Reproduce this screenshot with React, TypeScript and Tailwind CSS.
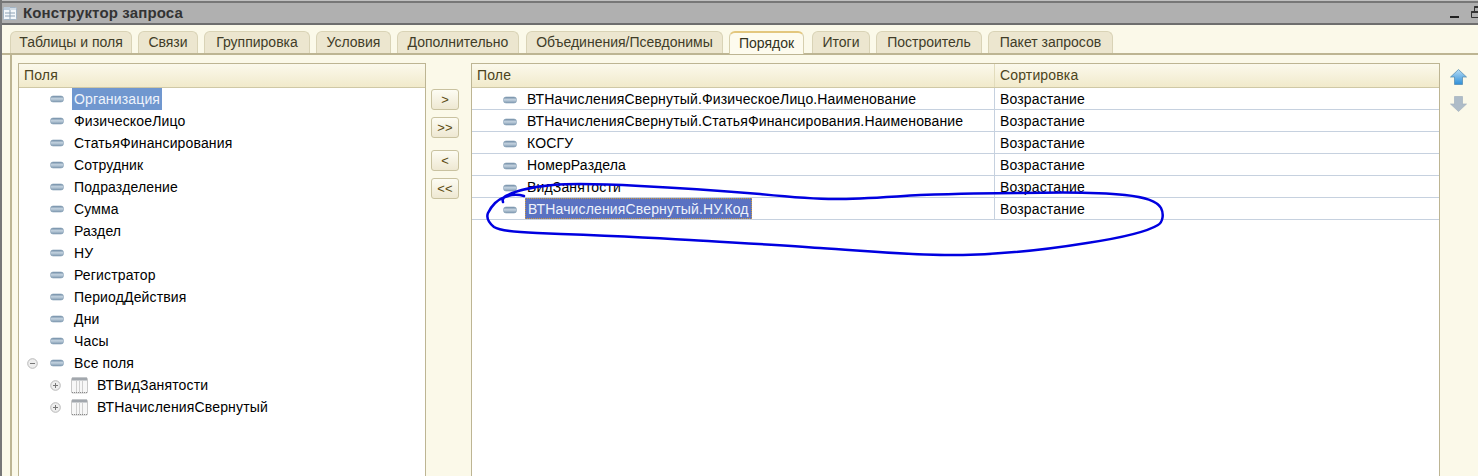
const tabs = [
  { label: "Таблицы и поля", w: "w-[122px]", gap: "mr-[6px]" },
  { label: "Связи", w: "w-[60px]", gap: "mr-[6px]" },
  { label: "Группировка", w: "w-[106px]", gap: "mr-[6px]" },
  { label: "Условия", w: "w-[75px]", gap: "mr-[6px]" },
  { label: "Дополнительно", w: "w-[122px]", gap: "mr-[7px]" },
  { label: "Объединения/Псевдонимы", w: "w-[197px]", gap: "mr-[6px]" },
  { label: "Порядок", w: "w-[75px]", gap: "mr-[8px]", active: true },
  { label: "Итоги", w: "w-[58px]", gap: "mr-[6px]" },
  { label: "Построитель", w: "w-[106px]", gap: "mr-[6px]" },
  { label: "Пакет запросов", w: "w-[125px]", gap: "" },
];

const fields = [
  "Организация",
  "ФизическоеЛицо",
  "СтатьяФинансирования",
  "Сотрудник",
  "Подразделение",
  "Сумма",
  "Раздел",
  "НУ",
  "Регистратор",
  "ПериодДействия",
  "Дни",
  "Часы",
];

const order = [
  "ВТНачисленияСвернутый.ФизическоеЛицо.Наименование",
  "ВТНачисленияСвернутый.СтатьяФинансирования.Наименование",
  "КОСГУ",
  "НомерРаздела",
  "ВидЗанятости",
  "ВТНачисленияСвернутый.НУ.Код",
];

const FieldIcon = () => (
  <svg width="14" height="8" viewBox="0 0 14 8" className="shrink-0">
    <defs>
      <linearGradient id="pill" x1="0" y1="0" x2="0" y2="1">
        <stop offset="0" stopColor="#6f8aa3" />
        <stop offset="0.45" stopColor="#c4d3e0" />
        <stop offset="1" stopColor="#7f99b0" />
      </linearGradient>
    </defs>
    <rect x="0.5" y="1" width="13" height="6" rx="2.5" fill="url(#pill)" stroke="#84a0b5" strokeWidth="0.6" />
  </svg>
);

const TableIcon = () => (
  <svg width="17" height="17" viewBox="0 0 17 17" className="shrink-0">
    <rect x="0.5" y="1" width="16" height="15" rx="1" fill="#f7f7f7" stroke="#c8c8c8" />
    <rect x="1" y="0.5" width="15" height="3" fill="#a2a7ad" />
    <path d="M5.5 3.5v12M8.5 3.5v12M11.5 3.5v12" stroke="#cfcfcf" />
    <path d="M1 15.5h15" stroke="#8a8a8a" strokeDasharray="1 1" />
  </svg>
);

const RoundToggle = ({ plus }: { plus?: boolean }) => (
  <svg width="11" height="11" viewBox="0 0 11 11" className="shrink-0">
    <circle cx="5.5" cy="5.5" r="4.8" fill="#eeeeee" stroke="#b8b8b8" />
    <path d={plus ? "M3 5.5h5M5.5 3v5" : "M3 5.5h5"} stroke="#777777" />
  </svg>
);

const MoveButton = ({ label, extra }: { label: string; extra?: string }) => (
  <button
    className={`h-[21px] w-[28px] rounded-[3px] border border-[#c9c2a0] bg-gradient-to-b from-[#fdfcf3] to-[#eee8d2] text-[13px] leading-[17px] text-[#5a4a10] ${extra ?? ""}`}
  >
    {label}
  </button>
);

const ArrowUp = () => (
  <svg width="17" height="16" viewBox="0 0 17 16">
    <defs>
      <linearGradient id="up" x1="0" y1="0" x2="0" y2="1">
        <stop offset="0" stopColor="#b5dcf5" />
        <stop offset="1" stopColor="#2f8fd8" />
      </linearGradient>
    </defs>
    <path d="M8.5 0.5L16.5 8H12.5V15.5H4.5V8H0.5Z" fill="url(#up)" stroke="#4f86ad" strokeWidth="0.7" strokeLinejoin="round" />
  </svg>
);

const ArrowDown = () => (
  <svg width="17" height="16" viewBox="0 0 17 16">
    <path d="M4.5 0.5H12.5V8H16.5L8.5 15.5L0.5 8H4.5Z" fill="#aebcc8" stroke="#a4b2be" strokeWidth="0.7" strokeLinejoin="round" />
  </svg>
);

export default function App() {
  return (
    <div className="relative flex h-[476px] w-[1478px] flex-col overflow-hidden border-l-2 border-[#777777] bg-[#fbf9e9] font-['Liberation_Sans',sans-serif] text-[14px] tracking-[0.15px] text-black">
      {/* title bar */}
      <div className="flex h-[25px] shrink-0 items-center border-t border-b-2 border-t-[#c0c0c0] border-b-[#6e6e6e] bg-[#b0b0b0] pl-[1px] shadow-[inset_0_2px_0_#777777]">
        <svg width="14" height="14" viewBox="0 0 14 14" className="mt-[1px] shrink-0">
          <rect x="0.5" y="1.5" width="13" height="12" rx="1" fill="#f4f7fa" stroke="#a3b5c6" />
          <rect x="1" y="1" width="6" height="3" fill="#bccbd9" />
          <rect x="7" y="2" width="6" height="2" fill="#d3dde6" />
          <path d="M7 4v9M2 7h10M2 10h10" stroke="#8ea2b5" />
        </svg>
        <span className="mt-[2px] ml-[6px] text-[15px] font-bold text-[#333333]">Конструктор запроса</span>
        <div className="ml-auto mr-[-5px] flex items-center gap-[12px]">
          <div className="mt-[10px] h-[2px] w-[9px] bg-[#222222]" />
          <svg width="12" height="14" viewBox="0 0 12 14">
            <path d="M3.5 1.5h7v6h-7zM0.5 6.5h8v6h-8z" fill="none" stroke="#333333" />
            <path d="M3.5 2h7M0.5 7h8" stroke="#333333" strokeWidth="2" />
          </svg>
        </div>
      </div>

      {/* tabs */}
      <div className="flex h-[30px] shrink-0 items-end border-b-2 border-[#bdb593] pl-[8px] tracking-normal">
        {tabs.map((t) => (
          <div
            key={t.label}
            className={`flex items-center justify-center rounded-t-[6px] border border-b-0 ${t.w} ${t.gap} ${
              t.active
                ? "relative top-[1px] h-[23px] border-[#d6cfae] border-t-2 border-t-[#e3c77e] bg-[#fdfbee] text-[#333322]"
                : "h-[22px] border-[#d9d3b6] bg-[#ece6cf] text-[#403c28]"
            }`}
          >
            {t.label}
          </div>
        ))}
      </div>

      {/* page body */}
      <div className="ml-[8px] flex min-h-0 flex-1 border-l-2 border-[#bdb593] pt-[8px] pl-[6px]">
        {/* left tree */}
        <div className="flex w-[408px] shrink-0 flex-col border border-b-0 border-[#bdb593] bg-white">
          <div className="flex h-[24px] shrink-0 items-center border-b border-[#cfc8a6] bg-gradient-to-b from-[#fbf9ec] to-[#f1eacb] pl-[5px] text-[#4c4420]">
            Поля
          </div>
          {fields.map((f, i) => (
            <div key={f} className="flex h-[22px] shrink-0 items-center pl-[31px]">
              <FieldIcon />
              <span
                className={`ml-[8px] flex h-[22px] items-center px-[2px] ${i === 0 ? "bg-[#7097cf] text-[#eef3fb]" : ""}`}
              >
                {f}
              </span>
            </div>
          ))}
          <div className="flex h-[22px] shrink-0 items-center pl-[8px]">
            <RoundToggle />
            <span className="ml-[12px] flex items-center">
              <FieldIcon />
            </span>
            <span className="ml-[10px]">Все поля</span>
          </div>
          {["ВТВидЗанятости", "ВТНачисленияСвернутый"].map((t) => (
            <div key={t} className="flex h-[22px] shrink-0 items-center pl-[31px]">
              <RoundToggle plus />
              <span className="ml-[10px] flex items-center">
                <TableIcon />
              </span>
              <span className="ml-[9px]">{t}</span>
            </div>
          ))}
        </div>

        {/* move buttons */}
        <div className="flex w-[45px] shrink-0 flex-col items-start pt-[26px] pl-[5px]">
          <MoveButton label=">" />
          <MoveButton label=">>" extra="mt-[7px]" />
          <MoveButton label="<" extra="mt-[12px]" />
          <MoveButton label="<<" extra="mt-[7px]" />
        </div>

        {/* order table */}
        <div className="flex w-[969px] shrink-0 flex-col border border-b-0 border-[#bdb593] bg-white">
          <div className="flex h-[24px] shrink-0 border-b border-[#cfc8a6] bg-gradient-to-b from-[#fbf9ec] to-[#f1eacb] text-[#4c4420]">
            <div className="flex w-[523px] items-center border-r border-[#e2dcbc] pl-[5px]">Поле</div>
            <div className="flex items-center pl-[5px]">Сортировка</div>
          </div>
          {order.map((o, i) => (
            <div key={o} className="flex h-[22px] shrink-0 border-b border-[#c6d1df]">
              <div className="flex w-[523px] items-center border-r border-[#c6d1df] pl-[31px]">
                <span className="mt-[2px] flex items-center">
                  <FieldIcon />
                </span>
                <span
                  className={`ml-[8px] flex h-[21px] items-center px-[2px] pt-[2px] ${
                    i === 5 ? "border border-dotted border-[#d09a3c] bg-[#5a72c2] px-[1px] text-[#eef3fb]" : ""
                  }`}
                >
                  {o}
                </span>
              </div>
              <div className="flex items-center pt-[2px] pl-[5px]">Возрастание</div>
            </div>
          ))}
        </div>

        {/* sort arrows */}
        <div className="flex flex-1 flex-col items-start gap-[11px] pt-[6px] pl-[10px]">
          <ArrowUp />
          <ArrowDown />
        </div>
      </div>

      {/* hand drawn marker over the screenshot */}
      <svg width="1478" height="476" className="pointer-events-none absolute top-0 left-[-2px]">
        <path
          d="M503 202C502 199 503 197 508 195C514 192 530 187 553 185C575 183 603 184 640 186C680 188 710 190 760 194C790 197 815 199 835 199C860 199 885 197 920 195C950 194 985 193 1020 193C1060 192 1100 192 1125 195C1145 197 1157 201 1161 208C1164 214 1163 222 1158 225C1145 233 1120 238 1087 243C1050 249 1010 254 963 255C920 256 880 252 820 248C780 245 740 243 690 240C640 237 590 235 537 233C515 232 500 231 494 227C488 222 486 218 488 213C491 207 496 200 505 197C512 194 518 194 524 196"
          fill="none"
          stroke="#0000e0"
          strokeWidth="2.5"
          strokeLinecap="round"
        />
      </svg>
    </div>
  );
}
